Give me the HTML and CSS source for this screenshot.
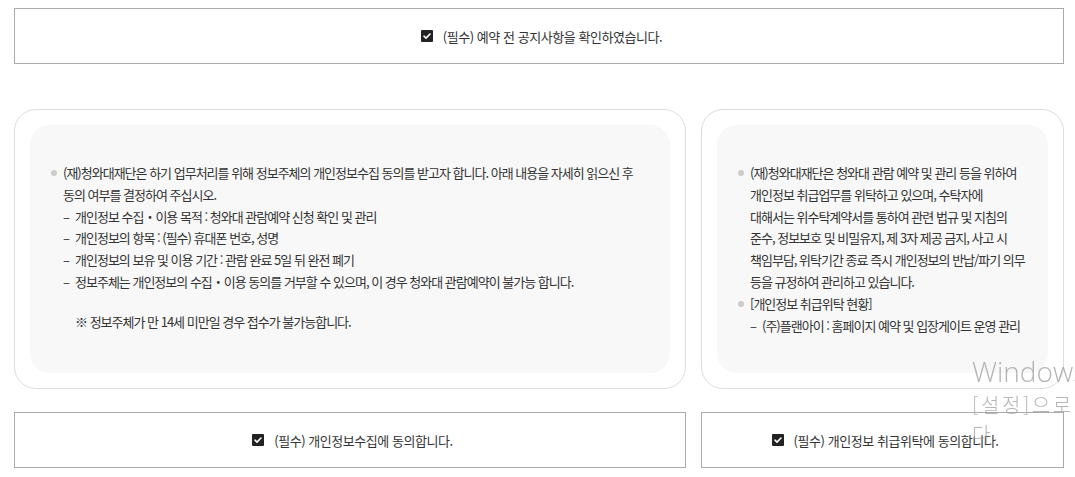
FILE: index.html
```html
<!DOCTYPE html>
<html lang="ko">
<head>
<meta charset="utf-8">
<title>개인정보 동의</title>
<link rel="stylesheet" href="styles.css">
</head>
<body>
<div class="page">
  <label class="check-box">
    <span class="check"><svg viewBox="0 0 12 12" width="12" height="12"><path d="M3 6.2 L5 8.1 L9 4" fill="none" stroke="#fff" stroke-width="1.6" stroke-linecap="round" stroke-linejoin="round"/></svg></span>
    <span class="label">(필수) 예약 전 공지사항을 확인하였습니다.</span>
  </label>

  <div class="cols cards">
    <div class="card">
      <div class="card-inner">
        <ul class="list">
          <li class="dot">(재)청와대재단은 하기 업무처리를 위해 정보주체의 개인정보수집 동의를 받고자 합니다. 아래 내용을 자세히 읽으신 후<br>동의 여부를 결정하여 주십시오.
            <ul class="sub">
              <li>개인정보 수집・이용 목적 : 청와대 관람예약 신청 확인 및 관리</li>
              <li>개인정보의 항목 : (필수) 휴대폰 번호, 성명</li>
              <li>개인정보의 보유 및 이용 기간 : 관람 완료 5일 뒤 완전 폐기</li>
              <li>정보주체는 개인정보의 수집・이용 동의를 거부할 수 있으며, 이 경우 청와대 관람예약이 불가능 합니다.</li>
            </ul>
            <p class="note">※ 정보주체가 만 14세 미만일 경우 접수가 불가능합니다.</p>
          </li>
        </ul>
      </div>
    </div>
    <div class="card">
      <div class="card-inner">
        <ul class="list">
          <li class="dot">(재)청와대재단은 청와대 관람 예약 및 관리 등을 위하여<br>개인정보 취급업무를 위탁하고 있으며, 수탁자에<br>대해서는 위수탁계약서를 통하여 관련 법규 및 지침의<br>준수, 정보보호 및 비밀유지, 제 3자 제공 금지, 사고 시<br>책임부담, 위탁기간 종료 즉시 개인정보의 반납/파기 의무<br>등을 규정하여 관리하고 있습니다.</li>
          <li class="dot">[개인정보 취급위탁 현황]
            <ul class="sub">
              <li>(주)플랜아이 : 홈페이지 예약 및 입장게이트 운영 관리</li>
            </ul>
          </li>
        </ul>
      </div>
    </div>
  </div>

  <div class="cols agrees">
    <label class="check-box">
      <span class="check"><svg viewBox="0 0 12 12" width="12" height="12"><path d="M3 6.2 L5 8.1 L9 4" fill="none" stroke="#fff" stroke-width="1.6" stroke-linecap="round" stroke-linejoin="round"/></svg></span>
      <span class="label">(필수) 개인정보수집에 동의합니다.</span>
    </label>
    <label class="check-box">
      <span class="check"><svg viewBox="0 0 12 12" width="12" height="12"><path d="M3 6.2 L5 8.1 L9 4" fill="none" stroke="#fff" stroke-width="1.6" stroke-linecap="round" stroke-linejoin="round"/></svg></span>
      <span class="label">(필수) 개인정보 취급위탁에 동의합니다.</span>
    </label>
  </div>
</div>

<div class="watermark">
  <div class="wm-title">Windows 정품 인증</div>
  <div class="wm-text">[설정]으로 이동하여 Windows를 정품 인증합니</div>
  <div class="wm-text">다.</div>
</div>
</body>
</html>
```

FILE: styles.css
```css
* { box-sizing: border-box; }
html, body { margin: 0; padding: 0; background: #fff; }
body {
  font-family: "Noto Sans CJK KR", "Noto Sans", sans-serif;
  color: #333;
  overflow: hidden;
}
.page {
  width: 1050px;
  margin: 8px 0 0 14px;
}
.check-box {
  display: flex;
  align-items: center;
  justify-content: center;
  gap: 10px;
  height: 56px;
  padding-left: 5px;
  border: 1px solid #aaa;
  background: #fff;
}
.check {
  width: 12px;
  height: 12px;
  background: #222;
  display: flex;
  border-radius: 1px;
}
.check svg { display: block; }
.label {
  font-size: 13px;
  letter-spacing: -0.45px;
  color: #333;
  line-height: 1;
}
.cols {
  display: grid;
  grid-template-columns: 672px 1fr;
  column-gap: 15px;
}
.cards { margin-top: 45px; }
.agrees { margin-top: 23px; }
.card {
  border: 1px solid #ddd;
  border-radius: 22px;
  padding: 15px;
  display: flex;
}
.card-inner {
  flex: 1;
  background: #f8f8f8;
  border-radius: 20px;
  padding: 37px 12px 37px 20px;
}
.list, .sub {
  list-style: none;
  margin: 0;
  padding: 0;
}
.list {
  font-size: 13px;
  letter-spacing: -1px;
  line-height: 21.8px;
  color: #333;
  white-space: nowrap;
}
.dot {
  position: relative;
  padding-left: 13px;
}
.dot::before {
  content: "";
  position: absolute;
  left: 1px;
  top: 8px;
  width: 6px;
  height: 6px;
  border-radius: 50%;
  background: #ccc;
}
.sub li {
  position: relative;
  padding-left: 12px;
}
.sub li::before {
  content: "–";
  position: absolute;
  left: 0;
  top: 0;
}
.note {
  margin: 18px 0 0 12px;
}
.watermark {
  position: fixed;
  left: 972px;
  top: 352px;
  white-space: nowrap;
  color: rgba(150, 150, 150, 0.7);
  font-family: "Noto Sans CJK KR", "Open Sans", sans-serif;
  font-weight: 300;
  pointer-events: none;
}
.wm-title {
  font-size: 28px;
  line-height: 38px;
  font-family: "Open Sans", "Noto Sans CJK KR", sans-serif;
  font-weight: 300;
}
.wm-text {
  font-size: 20px;
  line-height: 29px;
  letter-spacing: 2.6px;
}
```
